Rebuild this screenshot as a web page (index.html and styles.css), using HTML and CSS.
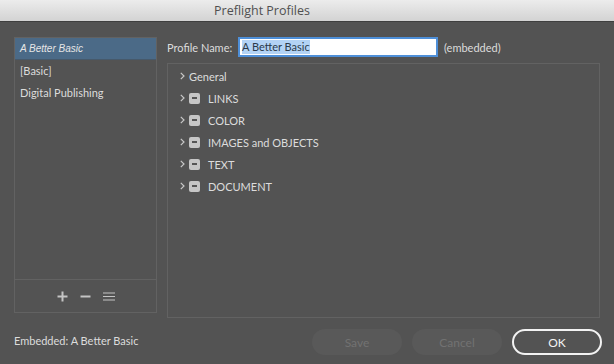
FILE: index.html
```html
<!DOCTYPE html>
<html lang="en">
<head>
  <meta charset="UTF-8" />
  <title>Preflight Profiles</title>
  <link rel="stylesheet" href="styles.css">
</head>
<body>
  <div class="titlebar">Preflight Profiles</div>

  <div class="content">
    <div class="sidebar">
      <div class="profiles">
        <div class="profile selected">A Better Basic</div>
        <div class="profile">[Basic]</div>
        <div class="profile">Digital Publishing</div>
      </div>
      <div class="toolbar">
        <svg width="11" height="11" viewBox="0 0 11 11"><path d="M5.5 0.5v10M0.5 5.5h10" stroke="#c4c4c4" stroke-width="2"/></svg>
        <svg width="11" height="11" viewBox="0 0 11 11"><path d="M0.5 5.5h10" stroke="#c4c4c4" stroke-width="2"/></svg>
        <svg width="12" height="9" viewBox="0 0 12 9"><path d="M0 1h12M0 4.5h12M0 8h12" stroke="#c4c4c4" stroke-width="1"/></svg>
      </div>
    </div>

    <div class="main">
      <div class="name-row">
        <label>Profile Name:</label>
        <div class="name-input"><span class="sel">A Better Basic</span></div>
        <span class="note">(embedded)</span>
      </div>
      <div class="tree">
        <div class="node plain"><svg class="chev" width="5" height="8" viewBox="0 0 5 8"><path d="M0.8 0.8L4 4L0.8 7.2" fill="none" stroke="#c8c8c8" stroke-width="1.2"/></svg>General</div>
        <div class="node"><svg class="chev" width="5" height="8" viewBox="0 0 5 8"><path d="M0.8 0.8L4 4L0.8 7.2" fill="none" stroke="#c8c8c8" stroke-width="1.2"/></svg><span class="box"></span>LINKS</div>
        <div class="node"><svg class="chev" width="5" height="8" viewBox="0 0 5 8"><path d="M0.8 0.8L4 4L0.8 7.2" fill="none" stroke="#c8c8c8" stroke-width="1.2"/></svg><span class="box"></span>COLOR</div>
        <div class="node"><svg class="chev" width="5" height="8" viewBox="0 0 5 8"><path d="M0.8 0.8L4 4L0.8 7.2" fill="none" stroke="#c8c8c8" stroke-width="1.2"/></svg><span class="box"></span>IMAGES and OBJECTS</div>
        <div class="node"><svg class="chev" width="5" height="8" viewBox="0 0 5 8"><path d="M0.8 0.8L4 4L0.8 7.2" fill="none" stroke="#c8c8c8" stroke-width="1.2"/></svg><span class="box"></span>TEXT</div>
        <div class="node"><svg class="chev" width="5" height="8" viewBox="0 0 5 8"><path d="M0.8 0.8L4 4L0.8 7.2" fill="none" stroke="#c8c8c8" stroke-width="1.2"/></svg><span class="box"></span>DOCUMENT</div>
      </div>
    </div>
  </div>

  <div class="footer">
    <div class="embedded">Embedded: A Better Basic</div>
    <div class="buttons">
      <button class="btn disabled">Save</button>
      <button class="btn disabled">Cancel</button>
      <button class="btn ok">OK</button>
    </div>
  </div>
</body>
</html>
```

FILE: styles.css
```css
body {
  margin: 0;
  width: 614px;
  height: 364px;
  overflow: hidden;
  background-color: #535353;
  font-family: Lato, "Liberation Sans", sans-serif;
  font-size: 11px;
  color: #dcdcdc;
}

.titlebar {
  height: 21px;
  line-height: 21px;
  border-bottom: 1px solid #3f3f3f;
  background: linear-gradient(#ececec, #d3d3d3);
  color: #505050;
  font-family: "Open Sans", sans-serif;
  font-size: 12.5px;
  text-align: center;
  padding-right: 90px;
}

.content {
  display: flex;
  gap: 10px;
  padding: 15px 0 0 14px;
}

.sidebar {
  width: 141px;
  height: 274px;
  border: 1px solid #626262;
  display: flex;
  flex-direction: column;
}

.profiles {
  flex: 1;
}

.profile {
  height: 22px;
  line-height: 22px;
  padding-left: 5px;
}

.profile.selected {
  background-color: #4b6a87;
  font-style: italic;
  font-family: "Liberation Sans", sans-serif;
  font-size: 10px;
  color: #e6e6e6;
  box-shadow: inset 0 -1px 0 #46596b;
}

.toolbar {
  height: 32px;
  border-top: 1px solid #626262;
  display: flex;
  align-items: center;
  justify-content: center;
  gap: 12px;
}

.main {
  width: 433px;
  display: flex;
  flex-direction: column;
}

.name-row {
  height: 20px;
  display: flex;
  align-items: center;
}

.name-row label {
  width: 71px;
}

.name-input {
  width: 194px;
  height: 16px;
  border: 2px solid #4e8fd8;
  background-color: #ffffff;
  display: flex;
  align-items: center;
  padding-left: 2px;
}

.name-input .sel {
  background-color: #b3d3f5;
  color: #2b3a4a;
  line-height: 14px;
}

.note {
  margin-left: 6px;
}

.tree {
  margin-top: 6px;
  height: 252px;
  border: 1px solid #626262;
  padding-top: 1px;
}

.node {
  height: 22px;
  display: flex;
  align-items: center;
  padding-left: 12px;
}

.chev {
  margin-right: 4px;
}

.box {
  width: 11px;
  height: 11px;
  border-radius: 2px;
  background-color: #c6c6c6;
  margin-right: 8px;
  position: relative;
}

.box::after {
  content: "";
  position: absolute;
  left: 3px;
  top: 4px;
  width: 5px;
  height: 2px;
  background-color: #555555;
}

.footer {
  display: flex;
  justify-content: space-between;
  align-items: center;
  padding: 11px 12px 0 14px;
}

.embedded {
  margin-top: -3px;
}

.buttons {
  display: flex;
  gap: 10px;
}

.btn {
  width: 90px;
  height: 26px;
  border-radius: 13px;
  font-family: Lato, "Liberation Sans", sans-serif;
  font-size: 12px;
  border: none;
  background-color: #595959;
  color: #727272;
}

.btn.ok {
  background-color: transparent;
  border: 2px solid #f2f2f2;
  color: #f2f2f2;
}
```
